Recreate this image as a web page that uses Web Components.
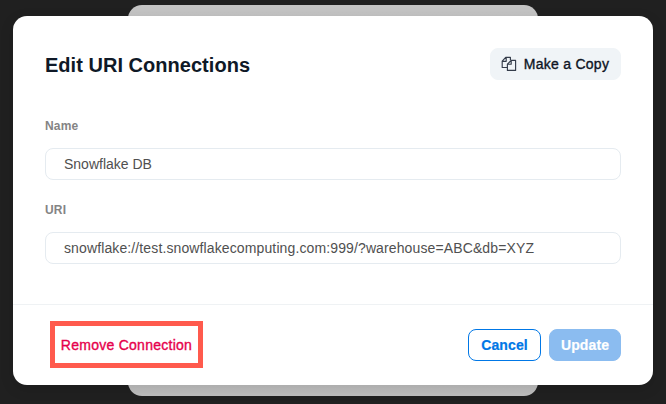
<!DOCTYPE html>
<html lang="en">
<head>
<meta charset="utf-8">
<title>Edit URI Connections</title>
<style>
html, body { margin: 0; height: 100%; overflow: hidden; background: #202020; }
body { font-family: "Liberation Sans", Arial, Helvetica, sans-serif; }
</style>
</head>
<body>
<connection-dialog></connection-dialog>
<script>
const define = (name, html) => customElements.define(name, class extends HTMLElement {
  constructor() {
    super();
    this.attachShadow({ mode: "open" }).innerHTML = html;
  }
});

define("ui-button", `
<style>
:host { display: inline-flex; align-items: center; justify-content: center; box-sizing: border-box;
  height: 32px; border: 1px solid transparent; border-radius: 8px; font-size: 14px; line-height: 16px;
  font-weight: 700; white-space: nowrap; letter-spacing: .12px; -webkit-text-stroke: .2px currentColor; }
:host([kind="outline"]) { width: 73px; color: #0077e6; border-color: #0077e6; background: #fff; }
:host([kind="primary"]) { width: 72px; color: #fff; background: #8bbcf0; border-color: #8bbcf0; }
:host([kind="soft"]) { width: 131px; gap: 7px; background: #f0f4f7; border-color: #f0f4f7; color: #0d1424;
  font-weight: 400; letter-spacing: .26px; -webkit-text-stroke: .35px currentColor; }
:host([kind="danger"]) { height: auto; border: 0; color: #e6004c; font-weight: 400;
  letter-spacing: .26px; -webkit-text-stroke: .35px currentColor; }
</style><slot name="icon"></slot><span><slot></slot></span>`);

define("copy-icon", `
<style>:host { display: block; width: 16px; height: 16px; margin-left: -1px; } svg { display: block; }</style>
<svg width="16" height="16" viewBox="0 0 16 16" fill="none" stroke="#343c4a" stroke-width="1.15" stroke-linejoin="round">
  <path d="M6.3 11.5H1.2V5.2L4.7 1.3H9.4V4.2M5.2 1.3V5.3H1.2"/>
  <path d="M10.2 4.4H14.6V14.4H6.4V8.2L10.2 4.4V8.2H6.4"/>
</svg>`);

define("form-field", `
<style>
:host { display: flex; flex-direction: column; gap: 15px; }
.label { font-size: 12px; line-height: 14px; font-weight: 700; color: #848484; letter-spacing: .2px; }
.input { box-sizing: border-box; height: 32px; border: 1px solid #e5ebf0; border-radius: 8px; padding: 0 18px;
  font-size: 14px; line-height: 30px; color: #505050; white-space: nowrap; }
:host([long]) .input { letter-spacing: .12px; }
</style>
<div class="label"><slot name="label"></slot></div>
<div class="input"><slot></slot></div>`);

define("highlight-frame", `
<style>
:host { display: flex; box-sizing: border-box; width: 153px; height: 47px; align-items: center;
  justify-content: center; border: 5px solid #ff5a4d; margin-bottom: 1px; padding-top: 1px; }
</style><slot></slot>`);

define("modal-card", `
<style>
:host { display: flex; flex-direction: column; box-sizing: border-box; width: 640px; height: 369px;
  border-radius: 14px; background: #fff; box-shadow: 0 4px 14px rgba(0,0,0,.13); }
header { display: flex; justify-content: space-between; align-items: center; padding: 32px 32px 0; height: 32px; }
h1 { margin: 0; padding-top: 2px; font-size: 20px; line-height: 24px; font-weight: 700; color: #0f1927;
  letter-spacing: .03px; }
main { flex: 1; display: flex; flex-direction: column; gap: 23px; padding: 39px 32px 0; }
footer { box-sizing: border-box; height: 81px; border-top: 1px solid #eff2f4; display: flex;
  align-items: center; justify-content: space-between; padding: 0 32px 0 37px; }
.actions { display: flex; gap: 8px; }
</style>
<header><h1><slot name="title"></slot></h1><slot name="tool"></slot></header>
<main><slot></slot></main>
<footer><slot name="left"></slot><div class="actions"><slot name="action"></slot></div></footer>`);

define("connection-dialog", `
<style>
:host { display: grid; width: 666px; height: 404px; grid-template: 404px / 666px; }
.behind { grid-area: 1 / 1; width: 410px; height: 391px; margin: 5px 0 0 128px; border-radius: 14px;
  background: linear-gradient(#c4c4c4, #bfbfbf); }
modal-card { grid-area: 1 / 1; margin: 16px 0 0 13px; }
</style>
<div class="behind"></div>
<modal-card>
  <span slot="title">Edit URI Connections</span>
  <ui-button slot="tool" kind="soft"><copy-icon slot="icon"></copy-icon>Make a Copy</ui-button>
  <form-field><span slot="label">Name</span>Snowflake DB</form-field>
  <form-field long><span slot="label">URI</span>snowflake://test.snowflakecomputing.com:999/?warehouse=ABC&amp;db=XYZ</form-field>
  <highlight-frame slot="left"><ui-button kind="danger">Remove Connection</ui-button></highlight-frame>
  <ui-button slot="action" kind="outline">Cancel</ui-button>
  <ui-button slot="action" kind="primary">Update</ui-button>
</modal-card>`);
</script>
</body>
</html>
